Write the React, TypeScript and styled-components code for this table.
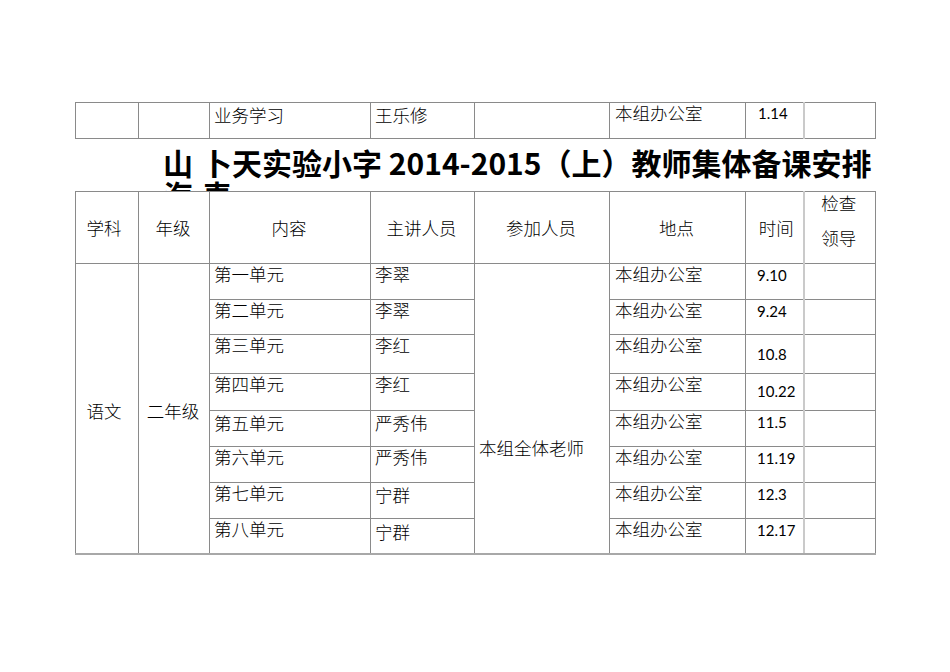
import React from "react";
import styled, { createGlobalStyle } from "styled-components";

const Global = createGlobalStyle`
  html, body { margin: 0; padding: 0; background: #ffffff; }
  body { font-family: "Noto Sans CJK SC", "Noto Sans", sans-serif; color: #111; }
`;

const Page = styled.div`
  width: 950px;
  height: 672px;
  box-sizing: border-box;
  padding: 102px 0 0 75px;
  overflow: hidden;
`;

const Table = styled.table`
  width: 800px;
  table-layout: fixed;
  border-collapse: collapse;
  border-spacing: 0;
`;

const Row = styled.tr<{ $h: number }>`
  height: ${(p) => p.$h}px;
`;

const Cell = styled.td<{
  $pt?: number;
  $pl?: number;
  $pr?: number;
  $center?: boolean;
  $middle?: boolean;
  $num?: boolean;
  $light?: boolean;
  $bottomThick?: boolean;
}>`
  border: 1px solid #8a8a8a;
  ${(p) => (p.$light ? "border-left: 2px solid #cacaca;" : "")}
  ${(p) => (p.$bottomThick ? "border-bottom: 2px solid #a8a8a8;" : "")}
  padding: ${(p) => p.$pt ?? 0}px ${(p) => p.$pr ?? 2}px 0 ${(p) => p.$pl ?? 4}px;
  vertical-align: ${(p) => (p.$middle ? "middle" : "top")};
  text-align: ${(p) => (p.$center ? "center" : "left")};
  font-family: ${(p) =>
    p.$num ? `"Lato", "Liberation Sans", sans-serif` : `"Noto Sans CJK SC", sans-serif`};
  font-size: ${(p) => (p.$num ? "15px" : "17.5px")};
  font-weight: ${(p) => (p.$num ? 400 : 300)};
  line-height: 20px;
  color: #000;
  white-space: nowrap;
  box-sizing: border-box;
`;

const Stacked = styled.div`
  line-height: 35px;
  margin-top: -15px;
`;

const TitleBlock = styled.div`
  height: 52px;
  overflow: hidden;
  display: flex;
  align-items: flex-start;
  box-sizing: border-box;
  padding: 7px 0 0 88px;
  font-family: "Noto Sans CJK SC", sans-serif;
  font-weight: 700;
  font-size: 30px;
  line-height: 32px;
  color: #000;
`;

const TitleLead = styled.div`
  width: 30px;
  word-break: break-all;
`;

const TitleMain = styled.div`
  margin-left: 9px;
  white-space: nowrap;
`;

const cols = [63, 71, 161, 104, 135, 136, 58, 72];

const ColGroup = () => (
  <colgroup>
    {cols.map((w, i) => (
      <col key={i} style={{ width: w }} />
    ))}
  </colgroup>
);

type BodyRow = {
  h: number;
  unit: string;
  unitPt?: number;
  person: string;
  personPt?: number;
  place: string;
  time: string;
  timePt?: number;
};

const rows: BodyRow[] = [
  { h: 36, unit: "第一单元", person: "李翠", place: "本组办公室", time: "9.10" },
  { h: 35, unit: "第二单元", person: "李翠", place: "本组办公室", time: "9.24" },
  { h: 39, unit: "第三单元", person: "李红", place: "本组办公室", time: "10.8", timePt: 9 },
  { h: 37, unit: "第四单元", person: "李红", place: "本组办公室", time: "10.22", timePt: 7 },
  { h: 36, unit: "第五单元", unitPt: 2, person: "严秀伟", personPt: 2, place: "本组办公室", time: "11.5" },
  { h: 36, unit: "第六单元", person: "严秀伟", place: "本组办公室", time: "11.19" },
  { h: 36, unit: "第七单元", person: "宁群", personPt: 2, place: "本组办公室", time: "12.3" },
  { h: 35, unit: "第八单元", person: "宁群", personPt: 3, place: "本组办公室", time: "12.17" },
];

export default function App() {
  const last = rows.length - 1;
  return (
    <Page>
      <Global />
      <Table>
        <ColGroup />
        <tbody>
          <Row $h={36}>
            <Cell />
            <Cell />
            <Cell $pt={2}>业务学习</Cell>
            <Cell $pt={2}>王乐修</Cell>
            <Cell />
            <Cell $pt={0} $pl={5}>本组办公室</Cell>
            <Cell $num $pt={0} $pl={12}>1.14</Cell>
            <Cell $light />
          </Row>
        </tbody>
      </Table>

      <TitleBlock>
        <TitleLead>山海</TitleLead>
        <TitleMain>
          卜天实验小字 2014-2015（上）教师集体备课安排
          <br />表
        </TitleMain>
      </TitleBlock>

      <Table>
        <ColGroup />
        <tbody>
          <Row $h={72}>
            <Cell $center $middle $pl={0} $pr={6}>学科</Cell>
            <Cell $center $middle $pl={0}>年级</Cell>
            <Cell $center $middle $pl={0}>内容</Cell>
            <Cell $center $middle $pl={0}>主讲人员</Cell>
            <Cell $center $middle $pl={0}>参加人员</Cell>
            <Cell $center $middle $pl={0}>地点</Cell>
            <Cell $center $middle $pl={6}>时间</Cell>
            <Cell $center $middle $light $pl={0}>
              <Stacked>
                检查
                <br />
                领导
              </Stacked>
            </Cell>
          </Row>
          {rows.map((r, i) => (
            <Row $h={r.h} key={r.unit}>
              {i === 0 && (
                <>
                  <Cell rowSpan={rows.length} $center $middle $pl={0} $pr={6} $pt={6} $bottomThick>
                    语文
                  </Cell>
                  <Cell rowSpan={rows.length} $center $middle $pl={0} $pt={6} $bottomThick>
                    二年级
                  </Cell>
                </>
              )}
              <Cell $pt={r.unitPt ?? 0} $bottomThick={i === last}>{r.unit}</Cell>
              <Cell $pt={r.personPt ?? 0} $bottomThick={i === last}>{r.person}</Cell>
              {i === 0 && (
                <Cell rowSpan={rows.length} $pt={174} $pl={4} $bottomThick>
                  本组全体老师
                </Cell>
              )}
              <Cell $pt={0} $pl={5} $bottomThick={i === last}>{r.place}</Cell>
              <Cell $num $pt={r.timePt ?? 1} $pl={11} $bottomThick={i === last}>
                {r.time}
              </Cell>
              <Cell $light $bottomThick={i === last} />
            </Row>
          ))}
        </tbody>
      </Table>
    </Page>
  );
}
